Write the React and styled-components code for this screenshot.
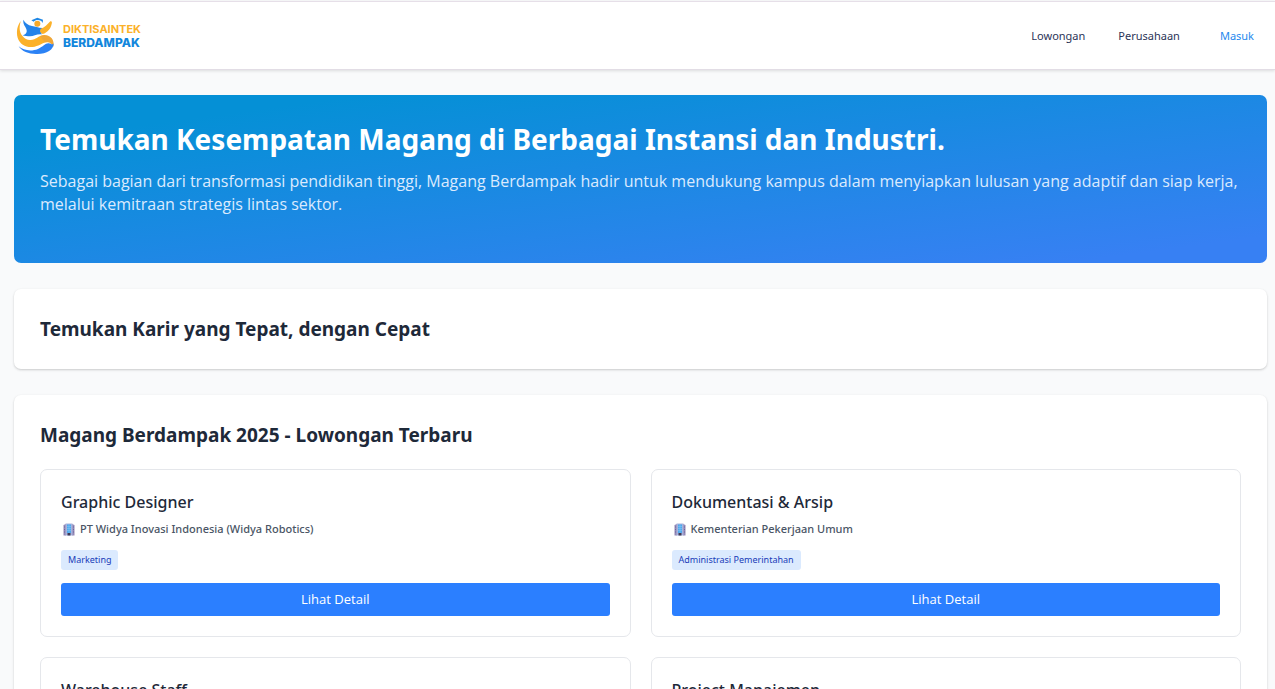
import React from 'react'
import styled, { createGlobalStyle } from "styled-components";

const GlobalStyle = createGlobalStyle`
    * {
        box-sizing: border-box;
    }
    body {
        margin: 0;
        background: #f9fafb;
        color: #1e2939;
        font-family: "Segoe UI", "Noto Sans", sans-serif;
    }
    h1, h2, h3, p {
        margin: 0;
    }
`
const Header = styled.header`
    display: flex;
    align-items: center;
    justify-content: space-between;
    height: 69px;
    margin-top: 1px;
    padding: 1px 21px 0 16px;
    background: #fff;
    border-top: 1px solid #e6dfe8;
    border-bottom: 1px solid #e2dde5;
    box-shadow: 0 1px 3px rgba(0, 0, 0, 0.12);
`
const Brand = styled.a`
    display: flex;
    align-items: center;
    gap: 8px;
    text-decoration: none;
`
const BrandName = styled.span`
    display: flex;
    flex-direction: column;
    font-family: Inter, sans-serif;
    font-size: 11px;
    font-weight: 700;
    line-height: 13px;
    color: #1286dc;
    .top {
        color: #fbb12a;
    }
    .bottom {
        font-size: 12px;
        font-weight: 800;
    }
`
const Nav = styled.nav`
    display: flex;
    gap: 33px;
`
const NavLink = styled.a`
    font-size: 11px;
    line-height: 18px;
    text-decoration: none;
    color: ${props => props.$login ? "#1e88ee" : "#2b3457"};
    margin-left: ${props => props.$login ? "7px" : "0"};
`
const Main = styled.main`
    display: flex;
    flex-direction: column;
    gap: 26px;
    padding: 25px 8px 26px 14px;
`
const Hero = styled.section`
    padding: 26px 26px 47px;
    border-radius: 7px;
    background: linear-gradient(to bottom right, #0590d6 14%, #3780f3 92%);
    color: #fff;
    h1 {
        font-size: 28px;
        line-height: 36px;
        font-weight: 700;
        margin-bottom: 13px;
    }
    p {
        font-family: "Segoe UI", "Open Sans", sans-serif;
        font-size: 16px;
        line-height: 23px;
        color: #dbeafe;
    }
`
const Panel = styled.section`
    padding: 26px;
    background: #fff;
    border-radius: 7px;
    box-shadow: 0 1px 3px rgba(0, 0, 0, 0.1), 0 1px 2px rgba(0, 0, 0, 0.1);
    h2 {
        font-size: 19px;
        line-height: 28px;
        font-weight: 700;
    }
`
const JobGrid = styled.div`
    display: grid;
    grid-template-columns: 1fr 1fr;
    gap: 20px;
    margin-top: 20px;
`
const JobCard = styled.article`
    padding: 20px;
    border: 1px solid #e5e7eb;
    border-radius: 7px;
    h3 {
        font-size: 16px;
        line-height: 24px;
        font-weight: 500;
    }
`
const Company = styled.p`
    display: flex;
    align-items: center;
    gap: 5px;
    padding: 6px 0 0 2px;
    font-size: 11px;
    line-height: 18px;
    font-weight: 500;
    color: #4a5565;
`
const Tag = styled.span`
    display: block;
    width: fit-content;
    margin: 12px 0 13px;
    padding: 3px 7px;
    border-radius: 3px;
    background: #dbeafe;
    color: #193cb8;
    font-size: 9px;
    line-height: 14px;
`
const DetailButton = styled.button`
    display: block;
    width: 100%;
    padding: 7px;
    border: none;
    border-radius: 3px;
    background: #2b7fff;
    color: #fff;
    font-family: "Segoe UI", "Open Sans", sans-serif;
    font-size: 13px;
    line-height: 19px;
    cursor: pointer;
`

const jobs = [
    { title: "Graphic Designer", company: "PT Widya Inovasi Indonesia (Widya Robotics)", tag: "Marketing" },
    { title: "Dokumentasi & Arsip", company: "Kementerian Pekerjaan Umum", tag: "Administrasi Pemerintahan" },
    { title: "Warehouse Staff", company: "PT Widya Inovasi Indonesia (Widya Robotics)", tag: "Logistik" },
    { title: "Project Manajemen", company: "Kementerian Pekerjaan Umum", tag: "Manajemen" },
]

function Logo() {
    return (
        <svg width="39" height="38" viewBox="0 0 117 114" aria-hidden="true">
            <defs>
                <pattern id="dots" width="5" height="5" patternUnits="userSpaceOnUse">
                    <circle cx="2.5" cy="2.5" r="1.5" fill="#c98562" />
                </pattern>
            </defs>
            <path d="M15 12C4 24 0 44 5 62C12 84 34 94 56 89C74 85 84 74 96 76C104 77 110 84 112 90C117 68 102 53 84 54C66 55 60 70 42 69C24 68 12 52 11 36C11 26 12 18 15 12Z" fill="#fbb12a" />
            <path d="M72 57C92 49 112 60 113 80L111 90C108 80 98 72 86 76Z" fill="url(#dots)" />
            <path d="M8 88C22 101 46 104 66 96C82 89 88 78 98 79C106 80 110 86 113 78C114 98 92 111 64 111C40 112 18 104 8 88Z" fill="#2b82f5" />
            <path d="M22 8C27 17 36 25 48 27C58 29 66 32 80 33C74 40 72 46 78 52C62 50 54 58 42 58C34 58 26 57 20 55C34 50 35 42 28 30C23 22 21 16 22 8Z" fill="#2483ea" />
            <path d="M74 35C86 32 94 22 103 13C107 11 109 15 107 21C104 36 94 47 80 51C72 47 70 41 74 35Z" fill="#fbb12a" />
            <circle cx="64" cy="20" r="9" fill="#f8a928" />
            <path d="M46 10L64 2L81 8L80 18L76 12C68 7 58 8 53 14Z" fill="#1f87e5" />
        </svg>
    )
}

function Building() {
    return (
        <svg width="12" height="13" viewBox="0 0 24 26" aria-hidden="true">
            <path d="M1 4L6 2V25H1ZM18 2L23 4V25H18Z" fill="#9287b6" />
            <path d="M5 1H19V25H5Z" fill="#a9b2dc" />
            <path d="M8 3H16V20H8Z" fill="#4ba9ee" />
            <path d="M12 3V20M8 7H16M8 11H16M8 15H16" stroke="#8cc9f5" strokeWidth="1" />
            <path d="M9 20H15V25H9Z" fill="#3e3a55" />
            <path d="M2 8H4M2 13H4M2 18H4M20 8H22M20 13H22M20 18H22" stroke="#6f669a" strokeWidth="2" />
        </svg>
    )
}

export default function App() {
    return (
        <>
            <GlobalStyle />
            <Header>
                <Brand href="#">
                    <Logo />
                    <BrandName>
                        <span className="top">DIKTISAINTEK</span>
                        <span className="bottom">BERDAMPAK</span>
                    </BrandName>
                </Brand>
                <Nav>
                    <NavLink href="#lowongan">Lowongan</NavLink>
                    <NavLink href="#perusahaan">Perusahaan</NavLink>
                    <NavLink href="#masuk" $login>Masuk</NavLink>
                </Nav>
            </Header>
            <Main>
                <Hero>
                    <h1>Temukan Kesempatan Magang di Berbagai Instansi dan Industri.</h1>
                    <p>
                        Sebagai bagian dari transformasi pendidikan tinggi, Magang Berdampak hadir untuk mendukung
                        kampus dalam menyiapkan lulusan yang adaptif dan siap kerja, melalui kemitraan strategis
                        lintas sektor.
                    </p>
                </Hero>
                <Panel>
                    <h2>Temukan Karir yang Tepat, dengan Cepat</h2>
                </Panel>
                <Panel>
                    <h2>Magang Berdampak 2025 - Lowongan Terbaru</h2>
                    <JobGrid>
                        {jobs.map(job => (
                            <JobCard key={job.title}>
                                <h3>{job.title}</h3>
                                <Company>
                                    <Building />
                                    {job.company}
                                </Company>
                                <Tag>{job.tag}</Tag>
                                <DetailButton type="button">Lihat Detail</DetailButton>
                            </JobCard>
                        ))}
                    </JobGrid>
                </Panel>
            </Main>
        </>
    )
}
